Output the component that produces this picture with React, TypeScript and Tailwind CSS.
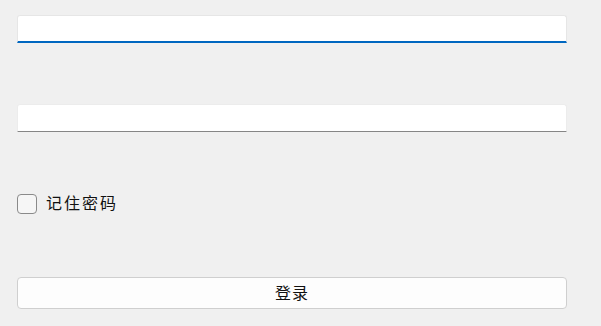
import { useState } from 'react'

export default function App() {
  const [remember, setRemember] = useState(false)

  return (
    <div
      className="w-[601px] h-[326px] bg-[#f0f0f0] pl-[17px] pr-[34px] pt-[15px] flex flex-col"
      style={{ fontFamily: '"Noto Sans CJK SC", "Noto Sans", sans-serif' }}
    >
      {/* account */}
      <input
        type="text"
        className="h-[28px] w-full bg-white border border-[#e6e6e6] border-b-2 border-b-[#0067c0] rounded-t-[3px] outline-none px-2 text-[14px]"
      />

      {/* password */}
      <input
        type="password"
        className="mt-[61px] h-[28px] w-full bg-white border border-[#ececec] border-b-[#868686] rounded-t-[3px] outline-none px-2 text-[14px]"
      />

      {/* remember me */}
      <label className="mt-[61px] flex items-center h-[21px] cursor-pointer select-none">
        <span
          onClick={() => setRemember(!remember)}
          className="w-[20px] h-[20px] rounded-[4px] border border-[#8a8a8a] bg-[#f6f6f6]"
        />
        <span className="ml-[9px] -mt-[3px] text-[16px] leading-none tracking-[2px] text-[#111]">记住密码</span>
      </label>

      {/* login */}
      <button className="mt-[63px] h-[32px] w-full bg-[#fdfdfd] border border-[#cfcfcf] rounded-[4px] text-[16px] tracking-[1px] text-[#111] flex items-center justify-center pb-[3px]">
        登录
      </button>
    </div>
  )
}
